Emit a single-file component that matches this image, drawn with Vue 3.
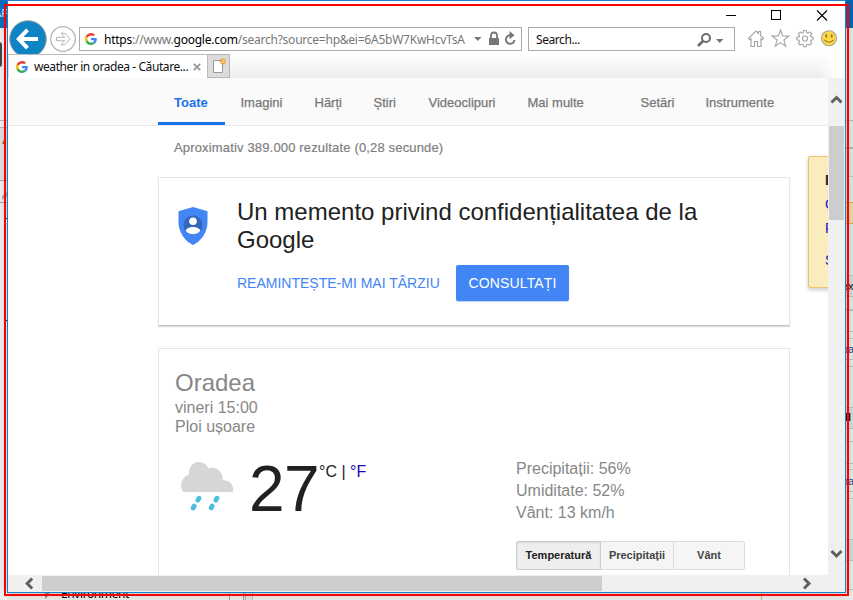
<script setup>
const url = { scheme: 'https', pre: '://www.', host: 'google.com', path: '/search?source=hp&ei=6A5bW7KwHcvTsA' }
const tabs = [
  { label: 'Toate', cls: 'n-all active' },
  { label: 'Imagini', cls: 'n-img' },
  { label: 'Hărți', cls: 'n-map' },
  { label: 'Știri', cls: 'n-news' },
  { label: 'Videoclipuri', cls: 'n-video' },
  { label: 'Mai multe', cls: 'n-more' },
  { label: 'Setări', cls: 'n-set' },
  { label: 'Instrumente', cls: 'n-tools' }
]
const details = ['Precipitații: 56%', 'Umiditate: 52%', 'Vânt: 13 km/h']
</script>

<template>
  <div class="desktop">
    <div class="strip-left"><span class="ap">AP</span><i class="blob"></i><i class="warn"></i><i class="mark"></i></div>
    <div class="strip-right">
      <span class="bit b1">ex</span><span class="bit b2">pa</span><span class="bit b3">ll</span><span class="bit b4">pa</span>
    </div>
    <div class="strip-bottom">
      <span class="tree-arrow"></span><span class="env">Environment</span>
    </div>

    <div class="window">
      <div class="titlebar">
        <svg width="104" height="26" viewBox="0 0 104 26" fill="none" stroke="#000" shape-rendering="crispEdges">
          <path d="M1 14.5h10M46.5 9.500h9v9h-9z" />
          <path d="M92 9.500l10 10M102 9.500l-10 10" shape-rendering="auto" stroke-width="1.1" />
        </svg>
      </div>

      <div class="toolbar">
        <svg class="arrows" width="71" height="38" viewBox="0 0 71 38">
          <circle cx="20" cy="19" r="18.300" fill="#0e84c4" stroke="#a5a19d" />
          <path d="M10.500 19H30M19.500 9.800L10.800 19l8.700 9.200" fill="none" stroke="#fff" stroke-width="4" />
          <circle cx="55" cy="19" r="12.300" fill="#fff" stroke="#b5b5b5" stroke-width="1.300" />
          <path d="M48.500 17.300h8.200l-3.700-4.200h3.500l5.600 5.900-5.600 5.900h-3.500l3.700-4.200h-8.200z" fill="#fff" stroke="#b5b5b5" />
        </svg>
        <div class="address">
          <svg class="g" width="12" height="12" viewBox="0 0 48 48">
            <path fill="#ea4335" d="M24 9.500c3.540 0 6.710 1.220 9.210 3.600l6.850-6.850C35.900 2.380 30.470 0 24 0 14.620 0 6.510 5.380 2.560 13.220l7.980 6.190C12.430 13.720 17.740 9.500 24 9.500z" />
            <path fill="#4285f4" d="M46.980 24.550c0-1.570-.15-3.090-.38-4.550H24v9.020h12.940c-.58 2.960-2.260 5.480-4.780 7.180l7.730 6c4.510-4.180 7.090-10.360 7.090-17.650z" />
            <path fill="#fbbc05" d="M10.530 28.590c-.48-1.450-.76-2.990-.76-4.590s.27-3.140.76-4.590l-7.980-6.190C.92 16.460 0 20.120 0 24s.92 7.540 2.560 10.780z" />
            <path fill="#34a853" d="M24 48c6.480 0 11.930-2.130 15.890-5.810l-7.730-6c-2.150 1.450-4.920 2.300-8.160 2.300-6.260 0-11.570-4.220-13.470-9.910l-7.980 6.190C6.510 42.620 14.620 48 24 48z" />
          </svg>
          <span class="url"><b>{{ url.scheme }}</b>{{ url.pre }}<b>{{ url.host }}</b>{{ url.path }}</span>
          <svg class="addr-icons" width="46" height="20" viewBox="0 0 46 20">
            <path d="M1 8h7.500L4.750 12z" fill="#777" />
            <path d="M16 9h10v7H16z" fill="#777" />
            <path d="M18 9V6.500a3 3 0 0 1 6 0V9" fill="none" stroke="#777" stroke-width="1.800" />
            <path d="M38 6.300A4.300 4.300 0 1 0 41.500 11" fill="none" stroke="#777" stroke-width="2" />
            <path d="M36.500 2l5 4.200-5 4z" fill="#777" />
          </svg>
        </div>
        <div class="searchbox">
          <span>Search...</span>
          <svg width="30" height="18" viewBox="0 0 30 18">
            <circle cx="9" cy="7" r="4" fill="none" stroke="#6d6d6d" stroke-width="2" />
            <path d="M6 10L1 15" stroke="#6d6d6d" stroke-width="2.600" />
            <path d="M19 8h7.500L22.750 12z" fill="#777" />
          </svg>
        </div>
        <svg class="tools" width="92" height="22" viewBox="0 0 92 22" fill="none" stroke="#a3a3a3" stroke-width="1.100">
          <path d="M1.500 10.500L9 3l2.500 2.500V3.500h2v4l3 3-1.500 1.300-1-.8v7.500h-3.500v-5h-3v5H4V11l-1 .8z" />
          <path d="M33.500 2l2.100 5.900 6.300.2-5 3.900 1.800 6.200-5.200-3.600-5.200 3.600 1.800-6.200-5-3.900 6.300-.2z" />
          <path d="M56.700 2.500h2.600l.4 2.100 1.300.5 1.800-1.200 1.900 1.900-1.200 1.800.5 1.300 2.100.4v2.600l-2.100.4-.5 1.300 1.200 1.800-1.900 1.900-1.800-1.200-1.300.5-.4 2.100h-2.600l-.4-2.100-1.300-.5-1.800 1.200-1.900-1.900 1.200-1.800-.5-1.300-2.100-.4V9.300l2.100-.4.500-1.300-1.200-1.800 1.900-1.900L55 5.100l1.300-.5z" />
          <circle cx="58" cy="10.600" r="2.600" />
          <circle cx="82" cy="10.300" r="7.500" fill="#fcd94c" stroke="#a8a391" />
          <path d="M79.300 6.500v3M84.700 6.500v3" stroke="#98711d" stroke-width="1.700" />
          <path d="M77.500 11.800q4.500 5 9 0" stroke="#98711d" />
        </svg>
      </div>

      <div class="tabrow">
        <div class="tab">
          <svg class="g" width="12" height="12" viewBox="0 0 48 48">
            <path fill="#ea4335" d="M24 9.500c3.540 0 6.710 1.220 9.210 3.600l6.850-6.850C35.900 2.380 30.470 0 24 0 14.620 0 6.510 5.380 2.560 13.220l7.980 6.190C12.430 13.720 17.740 9.500 24 9.500z" />
            <path fill="#4285f4" d="M46.980 24.550c0-1.570-.15-3.090-.38-4.550H24v9.020h12.940c-.58 2.960-2.260 5.480-4.780 7.180l7.730 6c4.510-4.180 7.090-10.360 7.090-17.650z" />
            <path fill="#fbbc05" d="M10.530 28.590c-.48-1.450-.76-2.990-.76-4.590s.27-3.140.76-4.590l-7.980-6.190C.92 16.460 0 20.120 0 24s.92 7.540 2.560 10.780z" />
            <path fill="#34a853" d="M24 48c6.480 0 11.930-2.130 15.890-5.810l-7.730-6c-2.150 1.450-4.920 2.300-8.160 2.300-6.260 0-11.570-4.220-13.470-9.910l-7.980 6.190C6.510 42.620 14.620 48 24 48z" />
          </svg>
          <span class="tab-title">weather in oradea - Căutare...</span>
          <svg class="close" width="8" height="8" viewBox="0 0 8 8"><path d="M.8.800l6.400 6.400M7.200.800L.8 7.200" stroke="#999" stroke-width="1.900" /></svg>
        </div>
        <div class="newtab">
          <svg width="22" height="22" viewBox="0 0 22 22">
            <path d="M5.500 5.500h9v12h-9z" fill="#fff" stroke="#9a9a9a" />
            <path d="M15 3v7M11.500 6.500h7M12.500 4l5 5M17.500 4l-5 5" stroke="#eba23a" stroke-width="1.200" />
            <circle cx="15" cy="6.500" r="1.600" fill="#f9c95c" />
          </svg>
        </div>
      </div>

      <div class="body">
        <div class="page">
          <nav class="nav">
            <span v-for="t in tabs" :key="t.label" :class="['navitem', t.cls]">{{ t.label }}</span>
          </nav>
          <div class="results">
            <main class="column">
              <p class="stats">Aproximativ 389.000 rezultate (0,28 secunde)</p>
              <section class="card privacy">
                <svg class="shield" width="30" height="38" viewBox="0 0 30 38">
                  <path d="M15 0L29.500 4.300V15C29.500 25 23.500 34 15 38 6.500 34 .5 25 .5 15V4.300z" fill="#4285f4" />
                  <circle cx="15" cy="18" r="9.500" fill="#3367b9" />
                  <circle cx="15" cy="14.300" r="3.800" fill="#fff" />
                  <path d="M7.800 23.500C9 18.800 21 18.800 22.200 23.500 20 28.500 10 28.500 7.800 23.500z" fill="#fff" />
                </svg>
                <div class="privacy-text">
                  <h2>Un memento privind confidențialitatea de la Google</h2>
                  <div class="actions"><span class="later">REAMINTEȘTE-MI MAI TÂRZIU</span><span class="review">CONSULTAȚI</span></div>
                </div>
              </section>
              <section class="card weather">
                <div class="city">Oradea</div>
                <div class="when">vineri 15:00</div>
                <div class="when">Ploi ușoare</div>
                <div class="now">
                  <svg class="cloud" width="54" height="50" viewBox="0 0 54 50">
                    <path d="M3 31C-.5 25 1 16 9.200 13.500 8.200 6 13 1 18.700 1c5 0 8.500 3 9.600 6.500C35 5 43 9.500 42.700 19.200 49.500 18.500 54.500 24 52.800 31z" fill="#d6d6d6" />
                    <path d="M19 37.200l-1.100 2M14.200 45l-1.100 2M37 37.200l-1.100 2M32.200 45l-1.100 2" stroke="#4dbfdc" stroke-width="4.800" stroke-linecap="round" />
                  </svg>
                  <div class="deg">27</div>
                  <div class="units">°C | <span>°F</span></div>
                  <div class="details">
                    <div v-for="d in details" :key="d">{{ d }}</div>
                  </div>
                </div>
                <div class="switch">
                  <span class="sw s1">Temperatură</span><span class="sw s2">Precipitații</span><span class="sw s3">Vânt</span>
                </div>
              </section>
            </main>
            <aside class="notice"><b>D</b><span>C</span><span>P</span><span class="last">S</span></aside>
          </div>
        </div>
        <div class="vscroll">
          <svg width="17" height="48" viewBox="0 0 17 48"><path d="M3.500 24.500l5-5 5 5" fill="none" stroke="#606060" stroke-width="3" /></svg>
          <div class="vthumb"></div>
          <svg class="down" width="17" height="17" viewBox="0 0 17 17"><path d="M3.500 6l5 5 5-5" fill="none" stroke="#606060" stroke-width="3" /></svg>
        </div>
      </div>
      <div class="hscroll">
        <svg width="34" height="17" viewBox="0 0 34 17"><path d="M24.200 3.500l-5 5 5 5" fill="none" stroke="#606060" stroke-width="3" /></svg>
        <div class="hthumb"></div>
        <svg class="right" width="17" height="17" viewBox="0 0 17 17"><path d="M6 3.500l5 5-5 5" fill="none" stroke="#606060" stroke-width="3" /></svg>
      </div>
    </div>
    <div class="highlight"></div>
  </div>
</template>

<style>
body { margin: 0; overflow: hidden; }
</style>
<style scoped>
* { box-sizing: border-box; }
svg { display: block; flex: none; }
.desktop { position: relative; width: 853px; height: 600px; overflow: hidden; background: #e9e9e9; font-family: "Liberation Sans", Arial, sans-serif; }
.strip-left { position: absolute; left: 0; top: 0; width: 7px; height: 600px; overflow: hidden;
  background: linear-gradient(#222, #222) 6px 218px / 1px 1px no-repeat, linear-gradient(#222, #222) 6px 320px / 1px 1px no-repeat, linear-gradient(#0a70c0 0 28px, #ededed 28px 120px, #b5b5b5 120px 121px, #ededed 121px 127px, #b5b5b5 127px 128px, #dedede 128px 180px, #a8a8a8 180px 181px, #ececec 181px 202px, #a0a0a0 202px 203px, #ececec 203px 219px, #eee 219px); }
.ap { position: absolute; left: -6px; top: 7px; font-size: 11px; line-height: 12px; color: #d5e8f7; }
.blob { position: absolute; left: -4px; top: 42px; width: 6px; height: 25px; border-radius: 3px; background: #444; }
.warn { position: absolute; left: 2px; top: 135px; border-left: 4px solid transparent; border-bottom: 9px solid #b06a35; }
.mark { position: absolute; left: 2px; top: 194px; width: 5px; height: 4px; background: #aaa; transform: skewY(-35deg); }
.strip-right { position: absolute; left: 846px; top: 0; width: 7px; height: 600px; overflow: hidden;
  background: linear-gradient(#0067b8 0 28px, #e6e6e6 28px 120px, #b4b4b4 120px 121px, #e4e4e4 121px 147px, #b4b4b4 147px 149px, #e2e2e2 149px 176px, #bbc2ca 176px 177px, #e2e2e2 177px 202px, #d1ab51 202px 203px, #e7d7a8 203px 223px, #d1ab51 223px 224px, #e0e2e5 224px 275px, #babfc8 275px 276px, #d3d5d9 276px 296px, #babfc8 296px 297px, #e4e4e6 297px 309px, #babfc8 309px 311px, #e6e6e8 311px 331px, #babfc8 331px 332px, #e6e6e8 332px 338px, #babfc8 338px 339px, #e6e6e8 339px 359px, #babfc8 359px 360px, #e6e6e8 360px 366px, #babfc8 366px 367px, #e4e4e6 367px 407px, #babfc8 407px 408px, #d5d6da 408px 428px, #babfc8 428px 429px, #e6e6e8 429px 441px, #babfc8 441px 442px, #e6e6e8 442px 463px, #babfc8 463px 464px, #e6e6e8 464px 469px, #babfc8 469px 470px, #e6e6e8 470px 491px, #babfc8 491px 492px, #e6e6e8 492px 498px, #babfc8 498px 499px, #e4e4e6 499px 539px, #babfc8 539px 540px, #d5d6da 540px 560px, #babfc8 560px 561px, #e8e8e8 561px 589px, #babfc8 589px 590px, #e8e8e8 590px); }
.bit { position: absolute; left: -4px; font-size: 11px; line-height: 12px; color: #111; }
.b1 { top: 280px; }
.b2 { top: 343px; color: #1d3f8e; }
.b3 { top: 411px; font-weight: bold; left: -1px; }
.b4 { top: 475px; color: #1d3f8e; }
.strip-bottom { position: absolute; left: 7px; top: 593px; width: 839px; height: 7px; overflow: hidden;
  background: linear-gradient(90deg, transparent 222px, #999 222px 223px, transparent 223px 236px, #999 236px 237px, #ddd 237px 238px, #aaa 238px 239px, #ddd 239px 245px, #bbb 245px 246px, transparent 246px 754px, #c5b27c 754px 755px, transparent 755px), #e8e8e8; }
.tree-arrow { position: absolute; left: 38px; top: -4px; border-left: 5px solid #888; border-top: 5px solid transparent; border-bottom: 5px solid transparent; }
.env { position: absolute; left: 54px; top: -7px; font: 12px/16px "Noto Sans", sans-serif; letter-spacing: -.4px; color: #000; white-space: nowrap; }
.highlight { position: absolute; left: 4px; top: 4px; width: 845px; height: 592px; border: 2px solid #f00; pointer-events: none; }

.window { position: absolute; left: 7px; top: 0; width: 839px; height: 593px; border: 1px solid #1b7fcc; background: #fff; box-shadow: 0 0 8px rgba(0, 0, 0, .22); display: flex; flex-direction: column; overflow: visible; }
.titlebar { height: 19px; flex: none; display: flex; justify-content: flex-end; padding-right: 16px; }
.toolbar { height: 34px; flex: none; display: flex; align-items: flex-start; }
.arrows { height: 38px; width: 71px; }
.address { height: 24px; width: 443px; flex: none; margin-top: 7px; border: 1px solid #ababab; display: flex; align-items: center; padding-left: 5px; margin-right: 6px; }
.url { width: 369px; flex: none; margin-left: 7px; font: 12px/22px "Noto Sans", "Open Sans", sans-serif; letter-spacing: -.24px; color: #777; white-space: nowrap; padding-top: 1px; }
.url b { font-weight: normal; color: #000; }
.searchbox { height: 24px; width: 207px; flex: none; margin-top: 7px; border: 1px solid #ababab; display: flex; align-items: center; justify-content: space-between; padding: 1px 7px 0 7px; font: 12px/22px "Noto Sans", "Open Sans", sans-serif; letter-spacing: -.42px; color: #111; }
.tools { margin: 8px 0 0 12px; }
.tabrow { height: 24px; flex: none; display: flex; position: relative; background: linear-gradient(90deg, transparent 812px, #fff 827px), linear-gradient(#fff, #ededed); }
.tab { width: 200px; height: 24px; background: #fff; border: 1px solid #bcbcbc; border-bottom: 0; border-left-color: #ddd; display: flex; align-items: center; padding-left: 7px; }
.tab-title { width: 159px; flex: none; margin-left: 6px; font: 12px/20px "Noto Sans", "Open Sans", sans-serif; letter-spacing: -.42px; color: #111; white-space: nowrap; }
.newtab { width: 22px; height: 24px; background: #dcdcdc; border: 1px solid #b5b5b5; border-left: 0; }

.body { height: 497px; flex: none; display: flex; }
.page { width: 820px; overflow: hidden; background: #fff; }
.nav { height: 48px; background: #fafafa; border-bottom: 1px solid #e9e9e9; padding-left: 150px; display: flex; }
.navitem { flex: none; height: 47px; padding-left: 15.500px; font-size: 13px; line-height: 49px; color: #777; -webkit-text-stroke: .25px #777; white-space: nowrap; }
.active { padding-left: 16px; color: #1a73e8; font-weight: bold; border-bottom: 3px solid #1a73e8; -webkit-text-stroke: 0; }
.n-all { width: 67px; }
.n-img { width: 74px; }
.n-map { width: 59px; }
.n-news { width: 55px; }
.n-video { width: 99px; }
.n-more { width: 113px; }
.n-set { width: 65px; }
.n-tools { width: 110px; }
.results { display: flex; height: 449px; }
.column { width: 632px; margin-left: 150px; flex: none; }
.stats { margin: 0; height: 51px; padding-left: 16px; font-size: 13px; line-height: 43px; letter-spacing: .16px; color: #808080; -webkit-text-stroke: .2px #808080; }
.card { border: 1px solid #e5e5e5; background: #fff; }
.privacy { height: 149px; margin-bottom: 22px; border-bottom-color: #c3c3c3; box-shadow: 0 1px 1px rgba(0, 0, 0, .14); display: flex; padding: 20px 0 0 19px; }
.shield { margin-top: 9px; }
.privacy-text { margin-left: 29px; width: 500px; }
h2 { margin: 0; font-size: 24px; line-height: 28px; font-weight: normal; color: #212121; }
.actions { display: flex; margin-top: 11px; height: 36px; font-size: 14px; line-height: 37px; white-space: nowrap; }
.later { width: 219px; color: #4285f4; }
.review { width: 113px; background: #4285f4; color: #fff; border-radius: 2px; text-align: center; letter-spacing: .15px; box-shadow: 0 1px 1px rgba(66, 133, 244, .35); }
.weather { height: 260px; padding: 19px 0 0 16px; color: #878787; }
.city { font-size: 24px; line-height: 29px; margin-bottom: 1px; }
.when { font-size: 16px; line-height: 19px; }
.now { display: flex; height: 105px; padding-top: 19px; }
.cloud { margin: 6px 0 0 5px; }
.deg { width: 70px; margin-left: 15px; font-size: 64px; line-height: 68px; height: 68px; color: #212121; letter-spacing: -.5px; }
.units { width: 121px; padding-top: 8px; font-size: 16px; line-height: 18px; color: #212121; white-space: nowrap; }
.units span { color: #1a0dab; }
.details { margin-left: 76px; padding-top: 3px; font-size: 16px; line-height: 22px; white-space: nowrap; }
.switch { display: flex; margin-left: 341px; }
.sw { height: 29px; border: 1px solid #dcdcdc; background: #f5f5f5; color: #444; font-size: 11px; font-weight: bold; line-height: 27px; text-align: center; }
.s1 { width: 85px; background: #eee; border-color: #ccc; color: #222; box-shadow: inset 0 1px 2px rgba(0, 0, 0, .1); border-radius: 2px 0 0 2px; }
.s2 { width: 73px; border-left: 0; }
.s3 { width: 71px; border-left: 0; border-radius: 0 2px 2px 0; }
.notice { flex: none; margin: 30px 0 0 18px; width: 200px; height: 132px; border: 1px solid #f0c36d; border-radius: 2px; background: #f9edbe; box-shadow: 0 2px 4px rgba(0, 0, 0, .2); padding: 11px 0 0 16px; display: flex; flex-direction: column; font-size: 14px; line-height: 24px; color: #1a0dab; }
.notice b { color: #222; }
.notice .last { margin-top: 8px; }
.vscroll { width: 17px; background: #f0f0f0; display: flex; flex-direction: column; }
.vthumb { width: 15px; height: 94px; margin-left: 1px; background: #cdcdcd; }
.down { margin-top: auto; margin-bottom: 13px; }
.hscroll { height: 17px; flex: none; background: #f0f0f0; display: flex; align-items: center; }
.hthumb { width: 560px; height: 15px; background: #cdcdcd; }
.right { margin-left: auto; margin-right: 30px; }
</style>
